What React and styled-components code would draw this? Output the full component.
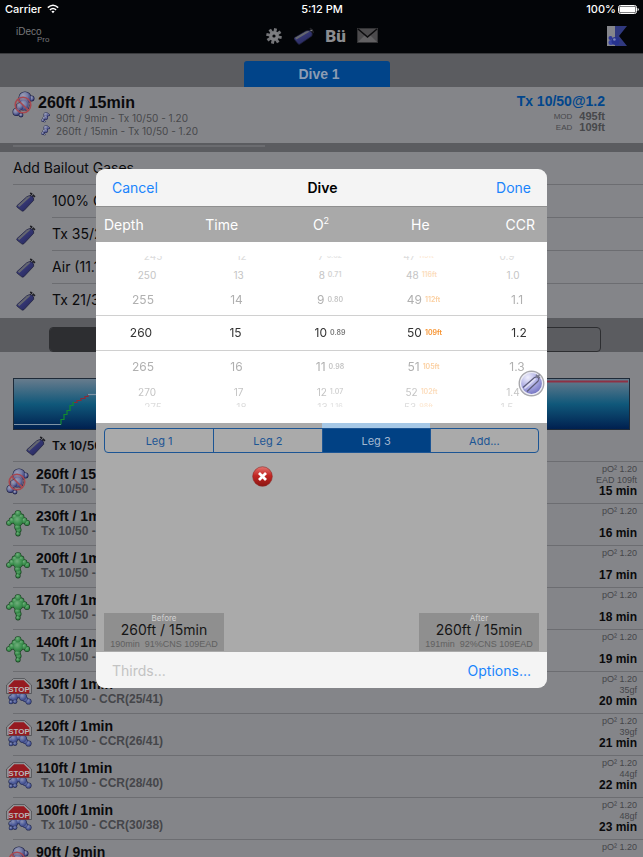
import React, { useState } from "react";
import styled, { createGlobalStyle } from "styled-components";

const sans = `Inter, "Liberation Sans", sans-serif`;
const helvetica = `"Liberation Sans", Arial, sans-serif`;

const GlobalStyle = createGlobalStyle`
  * {
    box-sizing: border-box;
  }
  body {
    margin: 0;
    background: #848589;
    font-family: ${sans};
    color: #0a0a0c;
  }
  button {
    border: 0;
    padding: 0;
    background: none;
    font: inherit;
    color: inherit;
    cursor: pointer;
  }
  svg {
    display: block;
    flex: none;
  }
  ul {
    list-style: none;
    margin: 0;
    padding: 0;
  }
`;

/* ---------- screen behind the sheet ---------- */

const Screen = styled.div`
  height: 100vh;
  overflow: hidden;
`;

const StatusBar = styled.div`
  display: grid;
  grid-template-columns: 1fr auto 1fr;
  align-items: center;
  height: 18px;
  padding: 0 4px 0 5px;
  background: #030508;
  color: #fff;
  font-size: 11px;
  font-weight: 500;
`;

const StatusGroup = styled.div`
  display: flex;
  align-items: center;
  gap: ${(props) => (props.$end ? "2px" : "5px")};
  justify-content: ${(props) => (props.$end ? "flex-end" : "flex-start")};
`;

const NavBar = styled.header`
  display: grid;
  grid-template-columns: 1fr auto 1fr;
  align-items: center;
  height: 36px;
  padding: 0 16px;
  background: #030508;
  border-bottom: 1px solid #3a3b3e;
`;

const Logo = styled.div`
  display: flex;
  flex-direction: column;
  color: #77787b;
  font-family: ${helvetica};
  font-size: 10px;
  line-height: 8px;
`;

const LogoSub = styled.span`
  padding-left: 21px;
  font-size: 8px;
`;

const NavIcons = styled.nav`
  display: flex;
  align-items: center;
  gap: 11px;
`;

const BuhlmannButton = styled.button`
  color: #8b8c8f;
  font-family: Roboto, ${helvetica};
  font-size: 17px;
  line-height: 18px;
  font-weight: 900;
`;

const FlagSlot = styled.div`
  justify-self: end;
`;

const TabBar = styled.div`
  display: flex;
  justify-content: center;
  align-items: flex-end;
  height: 33px;
  padding-right: 9px;
  background: #5b5c60;
`;

const DiveTab = styled.button`
  width: 146px;
  height: 26px;
  padding-left: 4px;
  border-radius: 3px 3px 0 0;
  background: #014489;
  color: #8c9cb3;
  font-family: ${helvetica};
  font-size: 14px;
  font-weight: 700;
`;

const Summary = styled.section`
  display: flex;
  align-items: flex-start;
  height: 56px;
  padding: 4px 38px 0 12px;
`;

const SummaryMain = styled.div`
  flex: 1;
  padding: 3px 0 0 3px;
`;

const SummaryTitle = styled.h1`
  margin: 0;
  font-family: ${helvetica};
  font-size: 16px;
  line-height: 17px;
  font-weight: 700;
`;

const SummaryLeg = styled.div`
  display: flex;
  align-items: center;
  gap: 6px;
  height: 13px;
  padding-left: 3px;
  color: #47484b;
  font-size: 10px;
`;

const SummaryGas = styled.div`
  display: flex;
  flex-direction: column;
  align-items: flex-end;
  color: #47484b;
  font-family: ${helvetica};
`;

const GasName = styled.div`
  color: #01468c;
  font-size: 14px;
  line-height: 20px;
  font-weight: 700;
`;

const GasFigure = styled.div`
  display: flex;
  align-items: center;
  gap: 7px;
  font-size: 8px;
  line-height: 11px;

  b {
    font-size: 11px;
  }
`;

const Divider = styled.div`
  height: 9px;
  padding: 2px 0 0 13px;
  background: #5b5c60;

  &::before {
    content: "";
    display: block;
    width: 40%;
    height: 2px;
    background: #6b6c70;
  }
`;

const Bailout = styled.section`
  padding: 0 0 1px 13px;
`;

const BailoutTitle = styled.h2`
  height: 33px;
  margin: 0;
  border-bottom: 1px solid #6c6d71;
  font-size: 14px;
  line-height: 31px;
  font-weight: 400;
`;

const BailoutRow = styled.li`
  display: flex;
  gap: 16px;
  align-items: center;
  padding-left: 3px;
  font-size: 14px;

  span {
    flex: 1;
    height: 33px;
    line-height: 32px;
    border-bottom: 1px solid ${(props) => (props.$last ? "transparent" : "#6c6d71")};
  }
`;

const ModeBand = styled.div`
  padding: 9px 42px 0 49px;
  background: #5b5c60;
`;

const ModeSwitch = styled.div`
  display: grid;
  grid-template-columns: 1fr 1fr;
  height: 25px;
  border: 1px solid #2d2e31;
  border-radius: 4px;
  overflow: hidden;
`;

const ModeButton = styled.button`
  background: ${(props) => (props.$active ? "#2d2e31" : "transparent")};
`;

const ProfileBox = styled.div`
  padding: 26px 13px 0;

  svg {
    width: 100%;
    height: 52px;
  }
`;

const StartGas = styled.div`
  display: flex;
  align-items: center;
  gap: 6px;
  height: 31px;
  padding-left: 26px;
  font-size: 12px;
  font-weight: 600;
`;

const StopRow = styled.li`
  display: flex;
  height: 42px;
  padding: 0 6px;
`;

const StopIcon = styled.div`
  width: 30px;
  padding-top: 7px;
`;

const StopBody = styled.div`
  flex: 1;
  display: flex;
  justify-content: space-between;
  border-top: 1px solid #6c6d71;
  /* the rule runs on under the icon and out to the edge of the screen */
  margin: 0 -6px 0 -23px;
  padding: 0 6px 0 23px;
`;

const StopText = styled.div`
  padding-top: 5px;
  font-family: ${helvetica};
  font-weight: 700;
`;

const StopTitle = styled.div`
  font-size: 14px;
  line-height: 15px;
`;

const StopGas = styled.div`
  padding-left: 5px;
  color: #45464a;
  font-size: 12px;
  line-height: 15px;
`;

const StopFigures = styled.div`
  padding-top: 2px;
  color: #45464a;
  font-family: ${helvetica};
  font-size: 9px;
  line-height: 11px;
  text-align: right;

  div {
    height: 11px;
  }
`;

const Runtime = styled.strong`
  display: block;
  color: #0a0a0c;
  font-size: 12px;
  line-height: 11px;
`;

/* ---------- sheet ---------- */

const Backdrop = styled.div`
  position: fixed;
  inset: 0;
  display: flex;
  align-items: center;
  justify-content: center;
`;

const Sheet = styled.div`
  width: 451px;
  max-width: 100%;
  border-radius: 9px;
  overflow: hidden;
  background: #aaa;
`;

const SheetBar = styled.div`
  display: flex;
  align-items: center;
  justify-content: space-between;
  height: ${(props) => (props.$bottom ? "36px" : "38px")};
  padding: 0 16px;
  background: #f4f4f4;
  border-bottom: ${(props) => (props.$bottom ? "0" : "1px solid #8f8f8f")};
  font-size: 14px;
`;

const SheetTitle = styled.h2`
  margin: 0;
  padding-right: 9px;
  font-size: 14px;
  font-weight: 600;
  color: #000;
`;

const LinkButton = styled.button`
  color: #1a84fc;

  &:disabled {
    color: #c3c3c3;
  }
`;

const ColumnLabels = styled.div`
  display: grid;
  grid-template-columns: 76px 1fr 1fr 1fr 77px;
  align-items: center;
  height: 35px;
  background: #a9a9a9;
  color: #fff;
  font-size: 14px;
  line-height: 16px;
  text-align: center;

  span:first-child {
    padding-left: 8px;
    text-align: left;
  }
  span:last-child {
    padding-right: 12px;
    text-align: right;
  }
  sup {
    font-size: 9px;
    line-height: 0;
  }
`;

const Picker = styled.div`
  position: relative;
  padding: 14px 0 13px;
  background: #fff;
`;

const rowHeights = [36, 31, 19, 6];
const rowColors = ["#333", "#b0b0b0", "#c4c4c4", "#dcdcdc"];
const noteColors = ["#777", "#c4c4c4", "#d2d2d2", "#e6e6e6"];
const warnColors = ["#f7922e", "#fbcfa0", "#fcdcbb", "#fdebd8"];
const rowInsets = [0, 2, 6, 12];

// rows away from the middle close in like the drum of a wheel
const PickerRow = styled.div`
  display: flex;
  justify-content: space-between;
  align-items: ${(props) => (props.$depth < 3 ? "center" : props.$above ? "flex-end" : "flex-start")};
  height: ${(props) => rowHeights[props.$depth]}px;
  margin: ${(props) => (props.$depth < 3 ? "0" : props.$above ? "0 0 3px" : "0 0 3px")};
  padding: 0 ${(props) => rowInsets[props.$depth]}px 0 ${(props) => 17 + rowInsets[props.$depth]}px;
  overflow: hidden;
  border: solid #d0d0d0;
  border-width: ${(props) => (props.$depth ? "0" : "1px 0")};
  color: ${(props) => rowColors[props.$depth]};
  font-size: ${(props) => (props.$depth < 2 ? "12px" : "10px")};
  line-height: 12px;
`;

const PickerCell = styled.div`
  display: flex;
  align-items: center;
  justify-content: center;
  gap: 3px;
  width: 56px;
  height: 12px;
`;

const Note = styled.small`
  font-size: 7px;
  font-weight: 600;
  color: ${(props) => (props.$warn ? warnColors : noteColors)[props.$depth]};
`;

const GasBall = styled.button`
  position: absolute;
  right: 2px;
  bottom: 26px;
`;

const LegMarker = styled.div`
  display: grid;
  grid-template-columns: repeat(4, 1fr);
  height: 5px;
  padding: 0 8px;
`;

const Marker = styled.i`
  background: ${(props) => (props.$active ? "#a6c8e6" : "transparent")};
`;

const LegSwitch = styled.div`
  display: grid;
  grid-template-columns: repeat(4, 1fr);
  height: 25px;
  margin: 0 8px;
  border: 1px solid #1c5594;
  border-radius: 4px;
  overflow: hidden;
`;

const LegButton = styled.button`
  border-left: ${(props) => (props.$first ? "0" : "1px solid #1c5594")};
  background: ${(props) => (props.$active ? "#014184" : "transparent")};
  color: ${(props) => (props.$active ? "#a3b8d0" : "#1c5594")};
  font-size: 11px;
`;

const LegActions = styled.div`
  height: 160px;
  padding: 13px 0 0 156px;
`;

const ResultRow = styled.div`
  display: flex;
  justify-content: space-between;
  padding: 0 8px 1px;
`;

const Result = styled.div`
  width: 120px;
  height: 38px;
  background: #8f8f8f;
  text-align: center;
`;

const ResultLabel = styled.div`
  color: #d2d2d2;
  font-size: 8px;
  line-height: 10px;
`;

const ResultValue = styled.div`
  color: #161616;
  font-size: 14px;
  line-height: 14px;
`;

const ResultNote = styled.div`
  color: #606060;
  font-family: ${helvetica};
  font-size: 9px;
  line-height: 14px;
  white-space: pre;
`;

/* ---------- drawings ---------- */

const Gradients = () => (
  <svg width='0' height='0' style={{ position: "absolute" }}>
    <defs>
      <radialGradient id='blueBubble' cx='0.35' cy='0.3' r='0.8'>
        <stop offset='0' stopColor='#8b93b6' />
        <stop offset='0.6' stopColor='#4f5d9b' />
        <stop offset='1' stopColor='#36407a' />
      </radialGradient>
      <radialGradient id='paleBubble' cx='0.35' cy='0.3' r='0.8'>
        <stop offset='0' stopColor='#9a9eb3' />
        <stop offset='0.45' stopColor='#767ca6' />
        <stop offset='1' stopColor='#25296a' />
      </radialGradient>
      <radialGradient id='greenBubble' cx='0.4' cy='0.3' r='0.8'>
        <stop offset='0' stopColor='#6fae7b' />
        <stop offset='0.6' stopColor='#3b8f4e' />
        <stop offset='1' stopColor='#2a7039' />
      </radialGradient>
      <linearGradient id='water' x1='0' y1='0' x2='0' y2='1'>
        <stop offset='0' stopColor='#697c8d' />
        <stop offset='0.5' stopColor='#10587a' />
        <stop offset='1' stopColor='#001f4f' />
      </linearGradient>
      <linearGradient id='tank' x1='0.2' y1='0.2' x2='0.8' y2='0.8'>
        <stop offset='0' stopColor='#3d3f80' />
        <stop offset='1' stopColor='#282a5f' />
      </linearGradient>
      <radialGradient id='ball' cx='0.35' cy='0.25' r='0.85'>
        <stop offset='0' stopColor='#f0f0fd' />
        <stop offset='0.5' stopColor='#a9a9e2' />
        <stop offset='1' stopColor='#5c5cb4' />
      </radialGradient>
      <linearGradient id='red' x1='0' y1='0' x2='0' y2='1'>
        <stop offset='0' stopColor='#e37470' />
        <stop offset='0.45' stopColor='#c22723' />
        <stop offset='1' stopColor='#8c1512' />
      </linearGradient>
    </defs>
  </svg>
);

// the dark discs go first, so that only the outside of the cluster is outlined
const Bubbles = ({ points, fill, edge }) => (
  <g>
    {points.map(([x, y, r], i) => (
      <circle key={"edge" + i} cx={x} cy={y} r={r + 0.6} fill={edge} />
    ))}
    {points.map(([x, y, r], i) => (
      <circle key={i} cx={x} cy={y} r={r} fill={`url(#${fill})`} />
    ))}
  </g>
);

const BottomIcon = ({ size = 23, banned = true }) => (
  <svg width={size} height={(size * 27) / 23} viewBox='0 0 23 27'>
    <Bubbles
      fill='paleBubble'
      edge='#1c2040'
      points={[
        [19.5, 7.5, 2.4],
        [13, 7, 6],
        [12, 14.5, 5],
        [8, 15.5, 3.5],
        [4.5, 21, 3.4],
        [9, 24, 1.8],
      ]}
    />
    {banned && (
      <g fill='none' stroke='#a8474f' strokeWidth='1.5'>
        <circle cx='11' cy='14' r='7.8' />
        <circle cx='11' cy='14' r='5.8' stroke='#96747c' strokeWidth='0.6' />
        <path d='M5.500 8.500 16.500 19.500' />
      </g>
    )}
  </svg>
);

const AscentIcon = () => (
  <svg width='24' height='27' viewBox='0 0 24 27'>
    <Bubbles
      fill='greenBubble'
      edge='#17401f'
      points={[
        [3, 13, 2.2],
        [21, 13, 2.4],
        [6, 10.5, 2.7],
        [18, 10.5, 2.7],
        [9, 7, 2.8],
        [15, 7, 2.8],
        [12, 3.6, 2.8],
        [12, 23.8, 2],
        [12.5, 20, 2.4],
        [11.5, 17, 2.6],
        [12, 11, 4.8],
      ]}
    />
  </svg>
);

const DecoIcon = () => (
  <svg width='26' height='28' viewBox='0 0 26 28'>
    <Bubbles
      fill='blueBubble'
      edge='#242b50'
      points={[
        [5, 19.5, 2],
        [12.5, 17, 2.6],
        [5, 24, 1.7],
        [9, 23.5, 1.8],
        [22.5, 23.5, 2.5],
        [19.5, 21.5, 2.2],
        [8, 19, 3.4],
        [17, 19, 3.4],
      ]}
    />
    <path d='M7.500 .6h11l6.900 6.400V15.500H.6V7z' fill='#98999c' stroke='#3e3f43' strokeWidth='0.700' />
    <path d='M8.200 2.300h9.600L23.300 7.700v7.900H2.700V7.700z' fill='#961a20' />
    <text x='13' y='14' textAnchor='middle' fontFamily='Liberation Sans' fontSize='8' fontWeight='700' fill='#b8b8bb'>
      STOP
    </text>
  </svg>
);

const TankIcon = ({ tilt = 0 }) => (
  <svg width='20' height='20' viewBox='0 0 20 20'>
    <g transform={`rotate(${tilt} 10 10)`}>
      <path d='M14.500 5 17 2.500' stroke='#1f1f24' strokeWidth='3' />
      <path d='M14.800 1.400l3.600 3' stroke='#1f1f24' strokeWidth='1.800' strokeLinecap='round' />
      <path d='M15 4l2-1.700' stroke='#85868c' strokeWidth='1' />
      <path d='M1 13.600 10.600 4.900q2.600-2 4.900-.8 2.900 1.300 2.200 4.200L7.900 18.700q-1.100.9-2.200.1L1.200 15.300q-.9-.9-.2-1.700z' fill='url(#tank)' stroke='#1d1e38' strokeWidth='0.700' />
      <path d='M1.600 13.700 10.900 5.300q1.900-1.500 3.800-.8L3.300 14.900z' fill='#65676f' />
    </g>
  </svg>
);

const GearIcon = () => (
  <svg width='18' height='18' viewBox='0 0 18 18'>
    <g stroke='#747578' strokeWidth='3'>
      {[0, 45, 90, 135].map((angle) => (
        <path key={angle} d='M9 1.200v15.600' transform={`rotate(${angle + 12} 9 9)`} />
      ))}
    </g>
    <circle cx='9' cy='9' r='4.800' fill='#7d7e81' />
    <circle cx='9' cy='9' r='1.600' fill='#030508' />
  </svg>
);

const MailIcon = () => (
  <svg width='21' height='15' viewBox='0 0 21 15'>
    <rect x='.5' y='.5' width='20' height='14' fill='#4c4b4d' stroke='#333335' />
    <path d='M1 14 8 7l2.500 2L13 7l7 7z' fill='#626163' />
    <path d='M1 1l9.500 8L20 1' fill='none' stroke='#0c0c0e' strokeWidth='1.600' />
  </svg>
);

const FlagIcon = () => (
  <svg width='20' height='20' viewBox='0 0 20 20'>
    <path d='M0 0h9v20H0z' fill='#85868b' />
    <path d='M8 0h12L12 10l8 10H8z' fill='#30397f' />
    <circle cx='3.500' cy='12' r='2' fill='#2c3898' />
    <circle cx='4' cy='16.500' r='2.500' fill='#3845a4' />
    <circle cx='8.500' cy='15' r='4' fill='#26328e' />
    <circle cx='7.400' cy='13.500' r='1.300' fill='#7b85bb' />
  </svg>
);

const WifiIcon = () => (
  <svg width='12' height='10' viewBox='0 0 12 10' fill='none' stroke='#fff' strokeWidth='1.500'>
    <path d='M.8 3.600q5.200-4.600 10.400 0M2.900 5.900q3.100-2.700 6.200 0' />
    <path d='M4.400 7.400q1.600-1.300 3.200 0L6 9.200z' fill='#fff' stroke='none' />
  </svg>
);

const BatteryIcon = () => (
  <svg width='21' height='9' viewBox='0 0 21 9'>
    <rect x='.5' y='.5' width='18' height='8' rx='2' fill='none' stroke='#fff' />
    <rect x='1.500' y='1.500' width='16' height='6' rx='1' fill='#fff' />
    <path d='M19.600 3v3q1.200-.4 1.200-1.500T19.600 3z' fill='#fff' />
  </svg>
);

const Profile = () => (
  <svg viewBox='0 0 617 52' preserveAspectRatio='none'>
    <rect x='.5' y='.5' width='616' height='51' fill='url(#water)' stroke='#1e2a38' />
    <g fill='none' strokeWidth='1.200'>
      <path d='M1 46.500h47' stroke='#7f93a5' />
      <path d='M48 46.500v-5h3v-5h3v-4h3v-5h3v-3h3' stroke='#118a31' />
      <path d='M61 24.500h3v-2h4v-2h4v-2h3v-2' stroke='#8a2a36' />
      <path d='M75 16.500h10' stroke='#7f93a5' />
      <path d='M300 3.500h315' stroke='#8e3144' strokeWidth='2' />
    </g>
  </svg>
);

const DeleteIcon = () => (
  <svg width='21' height='21' viewBox='0 0 21 21'>
    <circle cx='10.500' cy='10.500' r='9.800' fill='url(#red)' stroke='#8c2a28' strokeWidth='0.600' />
    <path d='M7 7l7 7M14 7l-7 7' stroke='#fff' strokeWidth='2.800' />
  </svg>
);

const BallIcon = () => (
  <svg width='27' height='27' viewBox='0 0 27 27'>
    <circle cx='13.500' cy='13.500' r='12.200' fill='url(#ball)' stroke='#a8a8ac' strokeWidth='1.500' />
    <circle cx='13.500' cy='13.500' r='11' fill='none' stroke='#ededf4' strokeWidth='1.200' />
    <path d='M5 17.500 16.500 7.500q2.500-1.500 4 .2 1.200 1.800-.6 3.600L9 21.500' fill='none' stroke='#5d5d78' strokeWidth='1.200' />
    <path d='M6.500 18.500 17.500 8.700' stroke='#dedef4' strokeWidth='1.400' />
    <path d='M18 4.800l4 3.200M21.500 4.500l-2 3.500' stroke='#77778a' strokeWidth='1.500' />
  </svg>
);

/* ---------- data ---------- */

const gases = ["100% O2", "Tx 35/25", "Air (11.1)", "Tx 21/35"];

const stops = [
  { icon: BottomIcon, title: "260ft / 15min", gas: "Tx 10/50 - 1.20", note: "EAD 109ft", runtime: 15 },
  { icon: AscentIcon, title: "230ft / 1min", gas: "Tx 10/50 - 1.20", note: "", runtime: 16 },
  { icon: AscentIcon, title: "200ft / 1min", gas: "Tx 10/50 - 1.20", note: "", runtime: 17 },
  { icon: AscentIcon, title: "170ft / 1min", gas: "Tx 10/50 - 1.20", note: "", runtime: 18 },
  { icon: AscentIcon, title: "140ft / 1min", gas: "Tx 10/50 - 1.20", note: "", runtime: 19 },
  { icon: DecoIcon, title: "130ft / 1min", gas: "Tx 10/50 - CCR(25/41)", note: "35gf", runtime: 20 },
  { icon: DecoIcon, title: "120ft / 1min", gas: "Tx 10/50 - CCR(26/41)", note: "39gf", runtime: 21 },
  { icon: DecoIcon, title: "110ft / 1min", gas: "Tx 10/50 - CCR(28/40)", note: "44gf", runtime: 22 },
  { icon: DecoIcon, title: "100ft / 1min", gas: "Tx 10/50 - CCR(30/38)", note: "48gf", runtime: 23 },
  { icon: BottomIcon, title: "90ft / 9min", gas: "Tx 10/50 - 1.20", note: "", runtime: 32 },
];

const pickerRows = [
  { offset: -3, values: [245, 12, 7, 47, "0.9"], po2: "0.62", end: "119ft" },
  { offset: -2, values: [250, 13, 8, 48, "1.0"], po2: "0.71", end: "116ft" },
  { offset: -1, values: [255, 14, 9, 49, "1.1"], po2: "0.80", end: "112ft" },
  { offset: 0, values: [260, 15, 10, 50, "1.2"], po2: "0.89", end: "109ft" },
  { offset: 1, values: [265, 16, 11, 51, "1.3"], po2: "0.98", end: "105ft" },
  { offset: 2, values: [270, 17, 12, 52, "1.4"], po2: "1.07", end: "102ft" },
  { offset: 3, values: [275, 18, 13, 53, "1.5"], po2: "1.16", end: "98ft" },
];

const legs = ["Leg 1", "Leg 2", "Leg 3", "Add..."];

const DiveSheet = () => {
  const [leg, setLeg] = useState(2);

  return (
    <Sheet role='dialog' aria-label='Dive'>
      <SheetBar>
        <LinkButton>Cancel</LinkButton>
        <SheetTitle>Dive</SheetTitle>
        <LinkButton>Done</LinkButton>
      </SheetBar>
      <ColumnLabels>
        <span>Depth</span>
        <span>Time</span>
        <span>
          O<sup>2</sup>
        </span>
        <span>He</span>
        <span>CCR</span>
      </ColumnLabels>
      <Picker>
        {pickerRows.map(({ offset, values, po2, end }) => {
          const depth = Math.abs(offset);
          return (
            <PickerRow key={offset} $depth={depth} $above={offset < 0}>
              {values.map((value, i) => (
                <PickerCell key={i}>
                  {value}
                  {i === 2 && <Note $depth={depth}>{po2}</Note>}
                  {i === 3 && (
                    <Note $depth={depth} $warn>
                      {end}
                    </Note>
                  )}
                </PickerCell>
              ))}
            </PickerRow>
          );
        })}
        <GasBall aria-label='Gases'>
          <BallIcon />
        </GasBall>
      </Picker>
      <LegMarker>
        {legs.map((name, i) => (
          <Marker key={name} $active={i === leg} />
        ))}
      </LegMarker>
      <LegSwitch>
        {legs.map((name, i) => (
          <LegButton key={name} $first={i === 0} $active={i === leg} onClick={() => setLeg(i)}>
            {name}
          </LegButton>
        ))}
      </LegSwitch>
      <LegActions>
        <button aria-label='Delete leg'>
          <DeleteIcon />
        </button>
      </LegActions>
      <ResultRow>
        <Result>
          <ResultLabel>Before</ResultLabel>
          <ResultValue>260ft / 15min</ResultValue>
          <ResultNote>190min  91%CNS 109EAD</ResultNote>
        </Result>
        <Result>
          <ResultLabel>After</ResultLabel>
          <ResultValue>260ft / 15min</ResultValue>
          <ResultNote>191min  92%CNS 109EAD</ResultNote>
        </Result>
      </ResultRow>
      <SheetBar $bottom>
        <LinkButton disabled>Thirds...</LinkButton>
        <LinkButton>Options...</LinkButton>
      </SheetBar>
    </Sheet>
  );
};

const App = () => {
  return (
    <>
      <GlobalStyle />
      <Gradients />
      <Screen>
        <StatusBar>
          <StatusGroup>
            Carrier <WifiIcon />
          </StatusGroup>
          <span>5:12 PM</span>
          <StatusGroup $end>
            100% <BatteryIcon />
          </StatusGroup>
        </StatusBar>
        <NavBar>
          <Logo>
            iDeco
            <LogoSub>Pro</LogoSub>
          </Logo>
          <NavIcons>
            <button aria-label='Settings'>
              <GearIcon />
            </button>
            <button aria-label='Gases'>
              <TankIcon tilt={12} />
            </button>
            <BuhlmannButton>Bü</BuhlmannButton>
            <button aria-label='Mail'>
              <MailIcon />
            </button>
          </NavIcons>
          <FlagSlot>
            <FlagIcon />
          </FlagSlot>
        </NavBar>
        <TabBar>
          <DiveTab>Dive 1</DiveTab>
        </TabBar>
        <Summary>
          <BottomIcon />
          <SummaryMain>
            <SummaryTitle>260ft / 15min</SummaryTitle>
            <SummaryLeg>
              <BottomIcon size={9} banned={false} />
              90ft / 9min - Tx 10/50 - 1.20
            </SummaryLeg>
            <SummaryLeg>
              <BottomIcon size={9} banned={false} />
              260ft / 15min - Tx 10/50 - 1.20
            </SummaryLeg>
          </SummaryMain>
          <SummaryGas>
            <GasName>Tx 10/50@1.2</GasName>
            <GasFigure>
              MOD <b>495ft</b>
            </GasFigure>
            <GasFigure>
              EAD <b>109ft</b>
            </GasFigure>
          </SummaryGas>
        </Summary>
        <Divider />
        <Bailout>
          <BailoutTitle>Add Bailout Gases</BailoutTitle>
          <ul>
            {gases.map((gas, i) => (
              <BailoutRow key={gas} $last={i === gases.length - 1}>
                <TankIcon />
                <span>{gas}</span>
              </BailoutRow>
            ))}
          </ul>
        </Bailout>
        <ModeBand>
          <ModeSwitch>
            <ModeButton $active aria-label='Plan' />
            <ModeButton aria-label='Profile' />
          </ModeSwitch>
        </ModeBand>
        <ProfileBox>
          <Profile />
        </ProfileBox>
        <StartGas>
          <TankIcon />
          Tx 10/50
        </StartGas>
        <ul>
          {stops.map(({ icon: Icon, title, gas, note, runtime }) => (
            <StopRow key={title}>
              <StopIcon>
                <Icon />
              </StopIcon>
              <StopBody>
                <StopText>
                  <StopTitle>{title}</StopTitle>
                  <StopGas>{gas}</StopGas>
                </StopText>
                <StopFigures>
                  <div>pO² 1.20</div>
                  <div>{note}</div>
                  <Runtime>{runtime} min</Runtime>
                </StopFigures>
              </StopBody>
            </StopRow>
          ))}
        </ul>
      </Screen>
      <Backdrop>
        <DiveSheet />
      </Backdrop>
    </>
  );
};

export default App;
